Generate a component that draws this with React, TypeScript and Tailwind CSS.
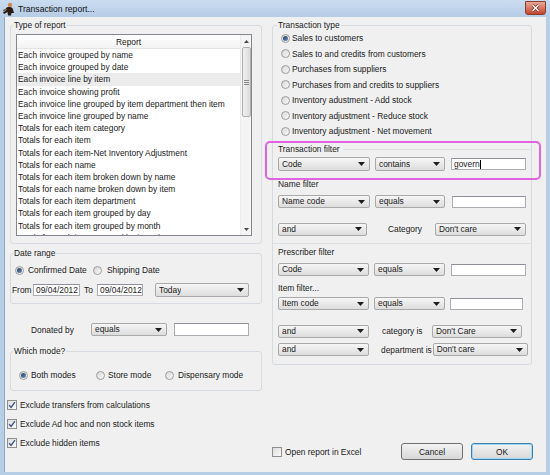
import React from "react";

const Arrow = () => (
  <svg width="7" height="4" viewBox="0 0 7 4" className="shrink-0">
    <path d="M0 0H7L3.5 4Z" fill="#1e1e1e" />
  </svg>
);

function Combo({ cls, text }: { cls: string; text: string }) {
  return (
    <div
      className={`flex items-center justify-between pl-[3px] pr-[4px] border border-[#a9a9a9] rounded-[2px] bg-linear-to-b from-[#f6f6f6] to-[#dddddd] shrink-0 ${cls}`}
    >
      <span className="leading-[11px] whitespace-nowrap overflow-hidden">{text}</span>
      <Arrow />
    </div>
  );
}

function Field({ cls, children }: { cls: string; children?: React.ReactNode }) {
  return (
    <div
      className={`flex items-center pl-[2px] border border-[#abadb3] border-t-[#8e9199] bg-white shrink-0 ${cls}`}
    >
      {children}
    </div>
  );
}

function Radio({ checked }: { checked?: boolean }) {
  return (
    <span className="w-[9px] h-[9px] shrink-0 rounded-full border border-[#9c9c9c] bg-linear-to-br from-[#d6d6d6] to-[#fbfbfb] flex items-center justify-center">
      {checked && (
        <span className="w-[5px] h-[5px] rounded-full bg-linear-to-br from-[#233c5c] to-[#6e95c2]" />
      )}
    </span>
  );
}

function Check({ checked }: { checked?: boolean }) {
  return (
    <span className="w-[10px] h-[10px] shrink-0 border border-[#8f8f8f] bg-linear-to-br from-[#dcdcdc] to-[#fbfbfb] flex items-center justify-center">
      {checked && (
        <svg width="8" height="8" viewBox="0 0 8 8">
          <path d="M1.2 4.2 L3.1 6.4 L6.9 1.2" stroke="#3d5387" strokeWidth="1.4" fill="none" />
        </svg>
      )}
    </span>
  );
}

const rows = [
  "Each invoice grouped by name",
  "Each invoice grouped by date",
  "Each invoice line by item",
  "Each invoice showing profit",
  "Each invoice line grouped by item department then item",
  "Each invoice line grouped by name",
  "Totals for each item category",
  "Totals for each item",
  "Totals for each item-Net Inventory Adjustment",
  "Totals for each name",
  "Totals for each item broken down by name",
  "Totals for each name broken down by item",
  "Totals for each item department",
  "Totals for each item grouped by day",
  "Totals for each item grouped by month",
  "Totals for each item grouped by item department",
];

function Scrollbar() {
  return (
    <div className="w-[11px] shrink-0 flex flex-col bg-[#f4f4f4] border-l border-[#ececec]">
      <div className="h-[12px] flex items-center justify-center shrink-0">
        <svg width="5" height="3" viewBox="0 0 5 3">
          <path d="M0 3H5L2.5 0Z" fill="#4a4a4a" />
        </svg>
      </div>
      <div className="h-[70px] mx-auto w-[9px] rounded-[2px] border border-[#b0b0b0] bg-linear-to-r from-[#f0f0f0] to-[#dcdcdc] flex flex-col items-center justify-center gap-[1px]">
        <span className="w-[5px] h-px bg-[#8a8a8a]" />
        <span className="w-[5px] h-px bg-[#8a8a8a]" />
        <span className="w-[5px] h-px bg-[#8a8a8a]" />
      </div>
      <div className="flex-1" />
      <div className="h-[12px] flex items-center justify-center shrink-0">
        <svg width="5" height="3" viewBox="0 0 5 3">
          <path d="M0 0H5L2.5 3Z" fill="#4a4a4a" />
        </svg>
      </div>
    </div>
  );
}

function ReportList() {
  return (
    <div className="ml-[5px] mt-[3px] w-[236px] h-[202px] border border-[#828790] bg-white flex overflow-hidden">
      <div className="flex-1 min-w-0 flex flex-col overflow-hidden">
        <div className="h-[14px] shrink-0 border-b border-[#e3e3e3] bg-linear-to-b from-white to-[#f3f3f3] flex items-center justify-center leading-[12px]">
          Report
        </div>
        {rows.map((r, i) => (
          <div
            key={i}
            className={`h-[12.2px] shrink-0 leading-[12.2px] pl-[1px] whitespace-nowrap ${i === 2 ? "bg-[#ececec]" : ""}`}
          >
            {r}
          </div>
        ))}
      </div>
      <Scrollbar />
    </div>
  );
}

function TitleIcon() {
  return (
    <svg width="13" height="14" viewBox="0 0 13 14" className="ml-[2px] shrink-0">
      <circle cx="8" cy="3" r="2.2" fill="#c98b4e" />
      <path d="M4 6 C5 4.5 9 4.5 10.5 6 L12 11 L9.5 11 L9 13.5 L6 13.5 L5.5 10 L2 12 L1 10.5 L4.5 8 Z" fill="#2a1c12" />
      <path d="M1 8 L4 6.5 L4.5 8 L1.5 9.5 Z" fill="#7a5530" />
    </svg>
  );
}

function CloseBtn() {
  return (
    <div className="self-start mt-[1px] mr-[4px] w-[21px] h-[14px] rounded-b-[3px] border border-[#8b3b30] bg-linear-to-b from-[#e8a897] to-[#c2432c] flex items-center justify-center">
      <svg width="9" height="8" viewBox="0 0 9 8">
        <path d="M1.5 1 L7.5 7 M7.5 1 L1.5 7" stroke="#6b2a20" strokeWidth="2.6" />
        <path d="M1.5 1 L7.5 7 M7.5 1 L1.5 7" stroke="#ffffff" strokeWidth="1.4" />
      </svg>
    </div>
  );
}

function Btn({ label, def }: { label: string; def?: boolean }) {
  return (
    <div
      className={`w-[62px] h-[17px] shrink-0 rounded-[3px] border flex items-center justify-center leading-[12px] bg-linear-to-b from-[#f3f3f3] to-[#d8d8d8] ${
        def ? "border-[#3c7fb1] shadow-[inset_0_0_0_1px_#9fd5f6]" : "border-[#707070]"
      }`}
    >
      {label}
    </div>
  );
}

export default function App() {
  return (
    <div className="w-[550px] h-[475px] flex flex-col bg-[#b7cee7] overflow-hidden font-['Liberation_Sans',Arial,sans-serif] text-[8.4px] text-[#1a1a1a]">
      {/* title bar */}
      <div className="h-[17px] shrink-0 flex items-center bg-linear-to-b from-[#cadcf0] to-[#b6cce6]">
        <TitleIcon />
        <span className="ml-[3px] text-[8.6px] leading-[12px] text-[#0f0f0f]">Transaction report...</span>
        <div className="flex-1" />
        <CloseBtn />
      </div>

      {/* client */}
      <div className="flex-1 flex mx-[4px] mb-[3px] bg-[#f0f0f0] border-l border-[#8ea9c6]">
        {/* left column */}
        <div className="w-[261px] shrink-0 flex flex-col">
          <fieldset className="ml-[5px] w-[252px] mt-[2px] border border-[#d5dbe0] rounded-[3px] pb-[7px]">
            <legend className="ml-[2px] px-[1px] leading-[12px]">Type of report</legend>
            <ReportList />
          </fieldset>

          <fieldset className="ml-[5px] w-[252px] mt-[3px] border border-[#d5dbe0] rounded-[3px] pb-[6px]">
            <legend className="ml-[2px] px-[1px] leading-[12px]">Date range</legend>
            <div className="mt-[5px] h-[12px] flex items-center">
              <div className="ml-[4px] w-[78px] flex items-center">
                <Radio checked />
                <span className="ml-[4px] leading-[12px]">Confirmed Date</span>
              </div>
              <div className="flex items-center">
                <Radio />
                <span className="ml-[5px] leading-[12px]">Shipping Date</span>
              </div>
            </div>
            <div className="mt-[7px] h-[14px] flex items-center">
              <span className="ml-[1px] w-[21px] leading-[12px]">From</span>
              <Field cls="w-[47px] h-[12px]">
                <span className="leading-[10px]">09/04/2012</span>
              </Field>
              <span className="ml-[4px] w-[13px] leading-[12px]">To</span>
              <Field cls="w-[46px] h-[12px]">
                <span className="leading-[10px]">09/04/2012</span>
              </Field>
              <Combo cls="ml-[12px] w-[94px] h-[14px]" text="Today" />
            </div>
          </fieldset>

          <div className="mt-[19px] h-[13px] flex items-center">
            <span className="ml-[26px] w-[60px] leading-[12px]">Donated by</span>
            <Combo cls="w-[76px] h-[13px]" text="equals" />
            <Field cls="ml-[7px] w-[75px] h-[13px]" />
          </div>

          <fieldset className="ml-[5px] w-[252px] mt-[9px] border border-[#d5dbe0] rounded-[3px] pb-[9px]">
            <legend className="ml-[2px] px-[1px] leading-[12px]">Which mode?</legend>
            <div className="mt-[12px] h-[12px] flex items-center">
              <div className="ml-[8px] w-[77px] flex items-center">
                <Radio checked />
                <span className="ml-[3px] leading-[12px]">Both modes</span>
              </div>
              <div className="w-[69px] flex items-center">
                <Radio />
                <span className="ml-[3px] leading-[12px]">Store mode</span>
              </div>
              <div className="flex items-center">
                <Radio />
                <span className="ml-[4px] leading-[12px]">Dispensary mode</span>
              </div>
            </div>
          </fieldset>

          <div className="mt-[8px] flex flex-col gap-[7px]">
            {[
              "Exclude transfers from calculations",
              "Exclude Ad hoc and non stock items",
              "Exclude hidden items",
            ].map((t) => (
              <div key={t} className="h-[12px] flex items-center">
                <span className="ml-[2px]">
                  <Check checked />
                </span>
                <span className="ml-[3px] leading-[12px]">{t}</span>
              </div>
            ))}
          </div>
        </div>

        {/* right column */}
        <div className="w-[280px] shrink-0 flex flex-col">
          <fieldset className="ml-[6px] w-[260px] mt-[2px] border border-[#d5dbe0] rounded-[3px] pb-[8px]">
            <legend className="ml-[4px] px-[1px] leading-[12px]">Transaction type</legend>
            <div className="flex flex-col">
              <div className="mt-[1px] flex flex-col gap-[3.5px]">
                {[
                  "Sales to customers",
                  "Sales to and credits from customers",
                  "Purchases from suppliers",
                  "Purchases from and credits to suppliers",
                  "Inventory adustment - Add stock",
                  "Inventory adjustment - Reduce stock",
                  "Inventory adjustment - Net movement",
                ].map((t, i) => (
                  <div key={t} className="h-[12px] flex items-center">
                    <span className="ml-[8px]">
                      <Radio checked={i === 0} />
                    </span>
                    <span className="ml-[2px] leading-[12px]">{t}</span>
                  </div>
                ))}
              </div>

              {/* highlighted transaction filter */}
              <div className="mt-[4px] -ml-[8px] -mr-[10px] border-2 border-[#e064e0] rounded-[5px] pb-[7px]">
                <div className="h-[12px] flex items-center">
                  <span className="ml-[11px] leading-[12px]">Transaction filter</span>
                  <span className="flex-1 ml-[3px] mr-[7px] h-px bg-[#dadfe3]" />
                </div>
                <div className="mt-[2px] h-[14px] flex items-center">
                  <Combo cls="ml-[11px] w-[92px] h-[14px]" text="Code" />
                  <Combo cls="ml-[5px] w-[70px] h-[14px]" text="contains" />
                  <Field cls="ml-[6px] w-[75px] h-[12px]">
                    <span className="leading-[10px]">govern</span>
                    <span className="w-px h-[9px] bg-black" />
                  </Field>
                </div>
              </div>

              <div className="-mt-[2px] h-[12px] flex items-center">
                <span className="ml-[5px] leading-[12px]">Name filter</span>
              </div>
              <div className="mt-[5px] h-[13px] flex items-center">
                <Combo cls="ml-[5px] w-[92px] h-[13px]" text="Name code" />
                <Combo cls="ml-[5px] w-[70px] h-[13px]" text="equals" />
                <Field cls="ml-[7px] w-[74px] h-[12px]" />
              </div>
              <div className="mt-[14.5px] h-[13px] flex items-center">
                <Combo cls="ml-[5px] w-[89px] h-[13px]" text="and" />
                <span className="w-[68px] pl-[21px] leading-[12px]">Category</span>
                <Combo cls="w-[91px] h-[13px]" text="Don't care" />
              </div>

              <div className="mt-[7.5px] h-px bg-[#dadfe3]" />

              <div className="mt-[2px] h-[12px] flex items-center">
                <span className="ml-[5px] leading-[12px]">Prescriber filter</span>
              </div>
              <div className="mt-[5px] h-[13px] flex items-center">
                <Combo cls="ml-[5px] w-[91px] h-[13px]" text="Code" />
                <Combo cls="ml-[5px] w-[71px] h-[13px]" text="equals" />
                <Field cls="ml-[6px] w-[75px] h-[12px]" />
              </div>

              <div className="mt-[6px] h-[12px] flex items-center">
                <span className="ml-[5px] leading-[12px]">Item filter...</span>
              </div>
              <div className="mt-[3px] h-[13px] flex items-center">
                <Combo cls="ml-[5px] w-[91px] h-[13px]" text="Item code" />
                <Combo cls="ml-[5px] w-[71px] h-[13px]" text="equals" />
                <Field cls="ml-[5px] w-[73px] h-[12px]" />
              </div>
              <div className="mt-[14.5px] h-[13px] flex items-center">
                <Combo cls="ml-[5px] w-[91px] h-[13px]" text="and" />
                <span className="w-[63px] pl-[13px] leading-[12px] whitespace-nowrap">category is</span>
                <Combo cls="w-[90px] h-[13px]" text="Don't Care" />
              </div>
              <div className="mt-[5.5px] h-[13px] flex items-center">
                <Combo cls="ml-[5px] w-[91px] h-[13px]" text="and" />
                <span className="pl-[12px] pr-[1px] shrink-0 leading-[12px] whitespace-nowrap">department is</span>
                <Combo cls="w-[95px] h-[13px]" text="Don't care" />
              </div>
            </div>
          </fieldset>

          <div className="mt-[78px] h-[17px] flex items-center">
            <span className="ml-[6px]">
              <Check />
            </span>
            <span className="ml-[3px] leading-[12px]">Open report in Excel</span>
            <div className="flex-1" />
            <Btn label="Cancel" />
            <span className="ml-[8px] mr-[13px]">
              <Btn label="OK" def />
            </span>
          </div>
        </div>
      </div>
    </div>
  );
}
